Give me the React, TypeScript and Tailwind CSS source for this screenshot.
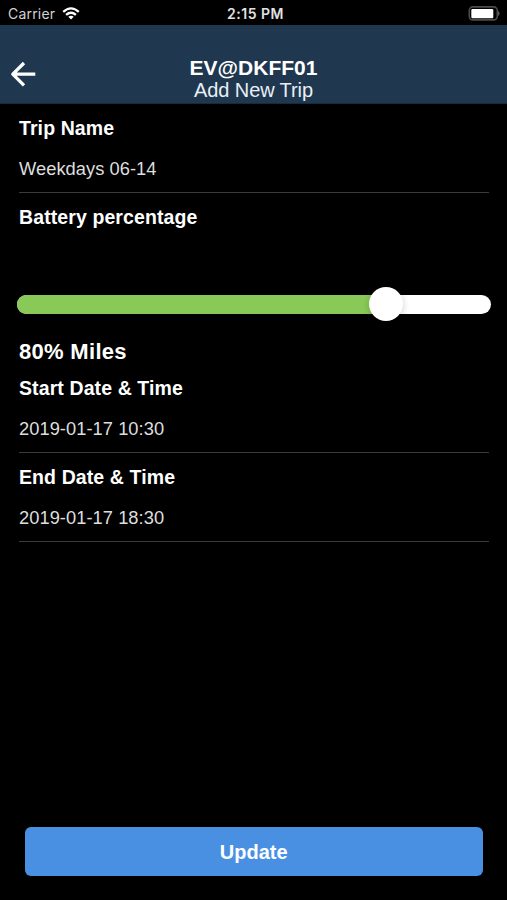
import type { ReactNode } from "react";

const LEVEL = 77.8;

function StatusBar() {
  return (
    <div className="grid h-[25px] shrink-0 grid-cols-3 items-center pl-[8px] pr-[7px] pt-[2px] font-['Inter','Liberation_Sans',sans-serif] text-[13px] text-[#d2d2d2]">
      <div className="flex items-center gap-[6.5px]">
        <span className="text-[14px] tracking-[0.2px]">Carrier</span>
        <svg width="18" height="14" viewBox="0 0 18 14" fill="none" stroke="#fff" strokeWidth="2.3">
          <path d="M1.2 4.8Q9 -2.1 16.8 4.8" />
          <path d="M4.1 7.9Q9 3.7 13.9 7.9" />
          <path d="M6.3 9.8Q9 7.7 11.7 9.8L9 12.6Z" fill="#fff" stroke="none" />
        </svg>
      </div>
      <span className="pl-[3px] text-center text-[14px] font-semibold tracking-[0.5px] text-[#e2e2e2]">2:15 PM</span>
      <svg className="-mt-px justify-self-end" width="32" height="15" viewBox="0 0 32 15">
        <rect x="1.3" y="0.9" width="28" height="13" rx="3.6" fill="#000" stroke="#4c4c4c" strokeWidth="1.6" />
        <rect x="3.3" y="2.9" width="22" height="9.4" rx="1.2" fill="#fff" />
        <path d="M30.4 5.4Q32 7.4 30.4 9.4Z" fill="#666" stroke="#666" strokeWidth="0.7" />
      </svg>
    </div>
  );
}

function Header() {
  return (
    <header className="grid h-[79px] shrink-0 grid-cols-[60px_1fr_60px] border-b border-[#172a3c] bg-[#1f374f]">
      <button aria-label="Back" className="flex pl-[10px] pt-[36px]">
        <svg width="26" height="26" viewBox="0 0 26 26" fill="none" stroke="#fff" strokeWidth="3.3" strokeLinejoin="round">
          <path d="M25.3 13.2H3M14 2L2.8 13.2L14 24.4" />
        </svg>
      </button>
      <div className="flex flex-col items-center pt-[32px] text-white">
        <h1 className="text-[21px] font-bold leading-[22px]">EV@DKFF01</h1>
        <p className="text-[20px] leading-[22px] tracking-[-0.1px] text-[#e9eff5]">Add New Trip</p>
      </div>
    </header>
  );
}

function Label({ children }: { children: ReactNode }) {
  return <h2 className="h-[24px] text-[19.5px] font-bold leading-[25px] tracking-[0.1px] text-white">{children}</h2>;
}

function Field({ label, value }: { label: string; value: string }) {
  return (
    <div className="mx-[19px] h-[89px] shrink-0 pt-[12px]">
      <Label>{label}</Label>
      <p className="mt-[16px] h-[37px] w-[470px] border-b border-[#3b3b3b] text-[18.3px] leading-[25px] tracking-[0.05px] text-[#dedede]">{value}</p>
    </div>
  );
}

export default function App() {
  return (
    <div className="flex h-[900px] w-[507px] flex-col overflow-hidden bg-black font-['Liberation_Sans',Arial,sans-serif]">
      <StatusBar />
      <Header />
      <Field label="Trip Name" value="Weekdays 06-14" />
      <section className="h-[171px] shrink-0 pt-[12px]">
        <div className="pl-[19px]">
          <Label>Battery percentage</Label>
        </div>
        <div className="relative ml-[17px] mt-[66px] h-[18.5px] w-[474px] rounded-full bg-white">
          <div className="h-full rounded-l-full bg-[#89c957]" style={{ width: `${LEVEL}%` }} />
          <div
            className="absolute top-[-8.5px] size-[34px] -translate-x-1/2 rounded-full bg-white shadow-[0_2px_7px_rgba(0,0,0,0.2)]"
            style={{ left: `${LEVEL}%` }}
          />
        </div>
        <p className="ml-[19px] mt-[25px] h-[26px] text-[22px] font-bold leading-[26px] tracking-[0.3px] text-white">80% Miles</p>
      </section>
      <Field label="Start Date & Time" value="2019-01-17 10:30" />
      <Field label="End Date & Time" value="2019-01-17 18:30" />
      <button className="mx-[25px] mb-[24.5px] mt-auto h-[49px] w-[457.5px] shrink-0 rounded-[6px] bg-[#4a90e2] pt-[2px] text-[20px] font-bold text-white">
        Update
      </button>
    </div>
  );
}
